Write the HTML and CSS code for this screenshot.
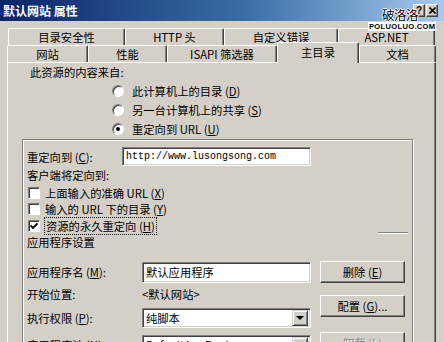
FILE: index.html
```html
<!DOCTYPE html>
<html lang="zh-CN">
<head>
    <meta charset="UTF-8">
    <title>默认网站 属性</title>
    <link rel="stylesheet" href="styles.css">
</head>
<body>
    <div class="window">
        <div class="titlebar">
            <span class="title">默认网站 属性</span>
            <div class="caption-btns">
                <span class="cap-btn">?</span>
                <span class="cap-btn">
                    <svg width="7" height="7" viewBox="0 0 7 7"><path d="M0.5 0.5 L6.5 6.5 M6.5 0.5 L0.5 6.5" stroke="#000" stroke-width="1.6"/></svg>
                </span>
            </div>
            <span class="wm-cn">破洛洛</span>
            <span class="wm-en">POLUOLUO.COM</span>
        </div>

        <div class="tabs">
            <div class="tab-row back">
                <div class="tab t-security">目录安全性</div>
                <div class="tab t-http">HTTP 头</div>
                <div class="tab t-errors">自定义错误</div>
                <div class="tab t-aspnet">ASP.NET</div>
            </div>
            <div class="tab-row front">
                <div class="tab t-site">网站</div>
                <div class="tab t-perf">性能</div>
                <div class="tab t-isapi">ISAPI 筛选器</div>
                <div class="tab t-home active">主目录</div>
                <div class="tab t-docs">文档</div>
            </div>
        </div>

        <div class="panel">
            <div class="source-label">此资源的内容来自:</div>
            <div class="radio-row"><span class="radio"></span><span>此计算机上的目录 (<u>D</u>)</span></div>
            <div class="radio-row"><span class="radio"></span><span>另一台计算机上的共享 (<u>S</u>)</span></div>
            <div class="radio-row"><span class="radio on"></span><span>重定向到 URL (<u>U</u>)</span></div>

            <div class="redirect-box">
                <div class="field-row">
                    <span class="label">重定向到 (<u>C</u>):</span>
                    <div class="textbox url">http://www.lusongsong.com</div>
                </div>
                <div class="plain-row">客户端将定向到:</div>
                <div class="check-row"><span class="checkbox"></span><span>上面输入的准确 URL (<u>X</u>)</span></div>
                <div class="check-row"><span class="checkbox"></span><span>输入的 URL 下的目录 (<u>Y</u>)</span></div>
                <div class="check-row last">
                    <span class="checkbox">
                        <svg width="8" height="8" viewBox="0 0 8 8"><path d="M0.5 3.5 L3 6 L7.5 1.5" fill="none" stroke="#000" stroke-width="1.8"/></svg>
                    </span>
                    <span class="focus">资源的永久重定向 (<u>H</u>)</span>
                    <span class="etch-line"></span>
                </div>
                <div class="plain-row">应用程序设置</div>

                <div class="app-area">
                    <div class="app-fields">
                        <div class="app-row">
                            <span class="label wide">应用程序名 (<u>M</u>):</span>
                            <div class="textbox app-name">默认应用程序</div>
                        </div>
                        <div class="app-row">
                            <span class="label wide">开始位置:</span>
                            <span>&lt;默认网站&gt;</span>
                        </div>
                        <div class="app-row perm">
                            <span class="label wide">执行权限 (<u>P</u>):</span>
                            <div class="textbox select">纯脚本<span class="drop-btn"><span class="arrow"></span></span></div>
                        </div>
                        <div class="app-row pool">
                            <span class="label wide">应用程序池 (<u>N</u>):</span>
                            <div class="textbox select">DefaultAppPool<span class="drop-btn"><span class="arrow"></span></span></div>
                        </div>
                    </div>
                    <div class="app-buttons">
                        <div class="btn">删除 (<u>E</u>)</div>
                        <div class="btn config">配置 (<u>G</u>)...</div>
                        <div class="btn unload disabled">卸载 (<u>L</u>)</div>
                    </div>
                </div>
            </div>
        </div>
    </div>
</body>
</html>
```

FILE: styles.css
```css
body {
    margin: 0;
    font-family: "Noto Sans CJK SC", sans-serif;
    font-size: 11.3px;
    color: #000;
    background-color: #d4d0c8;
}
.window {
    width: 444px;
    height: 342px;
    overflow: hidden;
    background-color: #d4d0c8;
}
u {
    text-decoration: underline;
}

/* title bar */
.titlebar {
    position: relative;
    height: 21px;
    padding-left: 3px;
    display: flex;
    align-items: center;
    background: linear-gradient(to right, #0a246a, #3a6ea5 55%, #a6caf0);
}
.title {
    color: #fff;
    font-weight: bold;
    font-size: 12px;
}
.caption-btns {
    margin-left: auto;
    margin-right: 6px;
    display: flex;
    gap: 1px;
}
.cap-btn {
    box-sizing: border-box;
    width: 12px;
    height: 13px;
    display: flex;
    align-items: center;
    justify-content: center;
    background-color: #d4d0c8;
    border: 1px solid;
    border-color: #fff #404040 #404040 #fff;
    box-shadow: inset -1px -1px #808080;
    font: bold 10px "Liberation Sans", sans-serif;
}
.wm-cn {
    position: absolute;
    left: 382px;
    top: 5px;
    font-size: 12.5px;
    letter-spacing: -0.5px;
    color: #000;
    text-shadow: 1px 0 #fff, -1px 0 #fff, 0 1px #fff, 0 -1px #fff;
}
.wm-en {
    position: absolute;
    left: 368px;
    top: 22px;
    font: bold 7.6px "Liberation Sans", sans-serif;
    letter-spacing: 0.3px;
    color: #000;
    background-color: #fff;
    padding: 0 1px;
    z-index: 2;
}

/* tabs */
.tabs {
    padding-top: 7px;
}
.tab-row {
    display: flex;
    height: 17px;
}
.tab-row.back {
    margin-left: 8px;
}
.tab-row.front {
    margin-left: 7px;
    align-items: flex-end;
}
.tab {
    box-sizing: border-box;
    height: 17px;
    display: flex;
    align-items: center;
    justify-content: center;
    border-top: 1px solid #fff;
    border-left: 1px solid #fff;
    border-right: 1px solid #404040;
    border-radius: 2px 2px 0 0;
    box-shadow: inset -1px 0 #808080;
    background-color: #d4d0c8;
}
.tab.active {
    height: 21px;
    margin-bottom: -1px;
    padding-bottom: 3px;
    position: relative;
    z-index: 1;
}
.t-security { width: 117px; }
.t-http { width: 99px; }
.t-errors { width: 114px; }
.t-aspnet { width: 97px; }
.t-site { width: 81px; }
.t-perf { width: 79px; }
.t-isapi { width: 110px; }
.t-home { width: 82px; }
.t-docs { width: 77px; }

/* panel */
.panel {
    box-sizing: border-box;
    margin-left: 7px;
    width: 429px;
    height: 300px;
    border-top: 1px solid #fff;
    border-left: 1px solid #fff;
    border-right: 1px solid #404040;
    box-shadow: inset -1px 0 #808080;
}
.source-label {
    height: 18px;
    line-height: 18px;
    padding-left: 22px;
}
.radio-row {
    height: 19px;
    display: flex;
    align-items: center;
    gap: 8px;
    padding-left: 104px;
}
.radio {
    box-sizing: border-box;
    width: 12px;
    height: 12px;
    border-radius: 50%;
    background-color: #fff;
    border: 1px solid;
    border-color: #808080 #fff #fff #808080;
    box-shadow: inset 1px 1px #404040;
    display: flex;
    align-items: center;
    justify-content: center;
}
.radio.on::after {
    content: "";
    width: 4px;
    height: 4px;
    border-radius: 50%;
    background-color: #000;
}

/* redirect group */
.redirect-box {
    box-sizing: border-box;
    margin: 1px 0 0 14px;
    width: 391px;
    height: 280px;
    padding-left: 4px;
    border: 1px solid #808080;
    box-shadow: inset 1px 1px #fff, 1px 1px #fff;
}
.field-row {
    margin-top: 6px;
    height: 21px;
    display: flex;
    align-items: center;
}
.label {
    width: 95px;
    flex-shrink: 0;
}
.label.wide {
    width: 115px;
}
.textbox {
    box-sizing: border-box;
    height: 19px;
    padding-left: 3px;
    display: flex;
    align-items: center;
    background-color: #fff;
    border: 1px solid;
    border-color: #808080 #fff #fff #808080;
    box-shadow: inset 1px 1px #404040, inset -1px -1px #d4d0c8;
}
.textbox.url {
    width: 189px;
    font: 10px "Liberation Mono", monospace;
}
.plain-row {
    height: 16px;
    line-height: 16px;
}
.check-row {
    height: 16px;
    display: flex;
    align-items: center;
    gap: 5px;
    padding-left: 1px;
}
.check-row:nth-of-type(3) {
    margin-top: 2px;
}
.check-row.last {
    height: 17px;
}
.checkbox {
    box-sizing: border-box;
    width: 12px;
    height: 12px;
    display: flex;
    align-items: center;
    justify-content: center;
    background-color: #fff;
    border: 1px solid;
    border-color: #808080 #fff #fff #808080;
    box-shadow: inset 1px 1px #404040;
}
.focus {
    outline: 1px dotted #000;
    outline-offset: 0;
    padding: 0 1px;
}
.etch-line {
    margin-left: auto;
    margin-right: 4px;
    align-self: flex-end;
    width: 30px;
    height: 1px;
    border-top: 1px solid #808080;
    background-color: #fff;
}

/* application settings */
.app-area {
    margin-top: 11px;
    display: flex;
}
.app-fields {
    width: 284px;
}
.app-row {
    height: 22px;
    display: flex;
    align-items: center;
}
.app-row.perm {
    margin-top: 2px;
}
.app-row.pool {
    margin-top: 5px;
}
.textbox.app-name {
    width: 169px;
    height: 21px;
}
.textbox.select {
    width: 169px;
    height: 20px;
    padding-right: 2px;
}
.drop-btn {
    box-sizing: border-box;
    margin-left: auto;
    width: 16px;
    height: 16px;
    display: flex;
    align-items: center;
    justify-content: center;
    background-color: #d4d0c8;
    border: 1px solid;
    border-color: #d4d0c8 #404040 #404040 #d4d0c8;
    box-shadow: inset 1px 1px #fff, inset -1px -1px #808080;
}
.arrow {
    width: 0;
    height: 0;
    border-left: 4px solid transparent;
    border-right: 4px solid transparent;
    border-top: 4px solid #000;
}
.app-buttons {
    margin-left: 9px;
    width: 85px;
}
.btn {
    box-sizing: border-box;
    height: 22px;
    display: flex;
    align-items: center;
    justify-content: center;
    background-color: #d4d0c8;
    border: 1px solid;
    border-color: #fff #404040 #404040 #fff;
    box-shadow: inset -1px -1px #808080;
}
.btn.config {
    margin-top: 12px;
}
.btn.unload {
    margin-top: 15px;
}
.btn.disabled {
    color: #808080;
    text-shadow: 1px 1px #fff;
}
```
